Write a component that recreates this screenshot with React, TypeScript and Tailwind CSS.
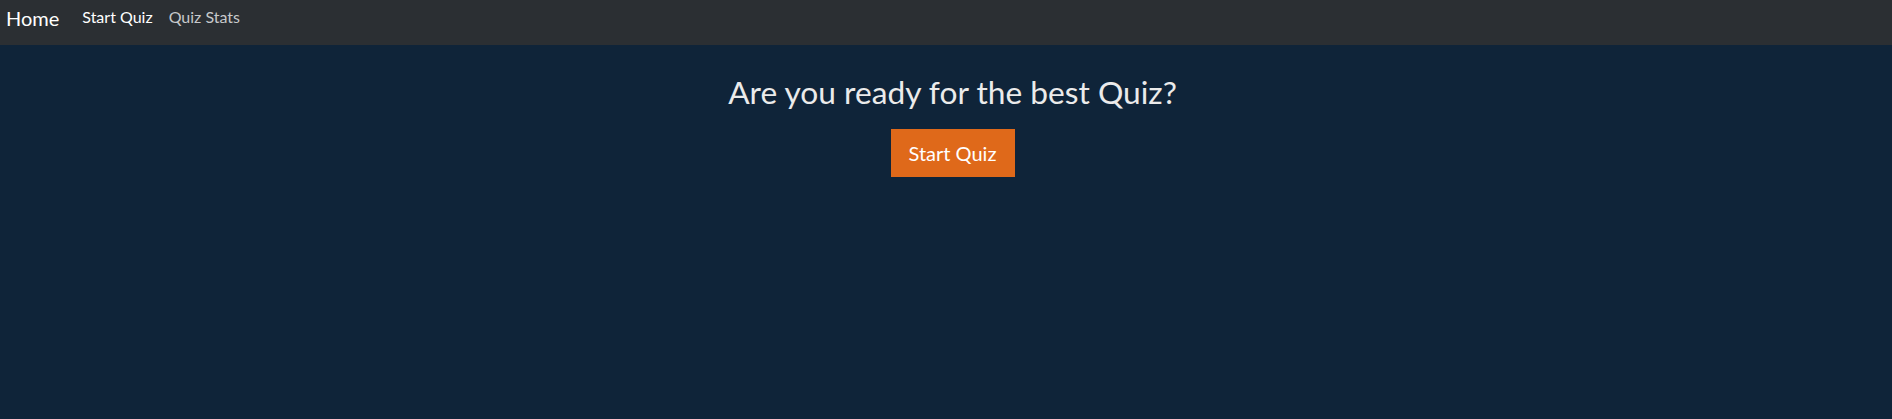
export default function App() {
  return (
    <div className="min-h-[419px] w-full bg-[#0f2439] font-['Lato',sans-serif]">
      <nav className="flex h-[45px] items-start bg-[#2b2f33] pl-[6px]">
        <a href="#" className="mr-[15px] mt-[3px] text-[20px] leading-[30px] text-white">
          Home
        </a>
        <div className="mt-[5px] flex items-center">
          <a href="#" className="px-2 text-[16px] leading-6 text-white">
            Start Quiz
          </a>
          <a href="#" className="px-2 text-[16px] leading-6 text-[#c7c9cb]">
            Quiz Stats
          </a>
        </div>
      </nav>
      <main className="flex flex-col items-center pl-[13px] pt-[28px]">
        <h2 className="text-[31.7px] leading-[38px] text-[#ebebeb]">Are you ready for the best Quiz?</h2>
        <button className="mt-[18px] h-[48px] w-[124px] bg-[#df691a] text-[20px] leading-[30px] text-white">
          Start Quiz
        </button>
      </main>
    </div>
  );
}
